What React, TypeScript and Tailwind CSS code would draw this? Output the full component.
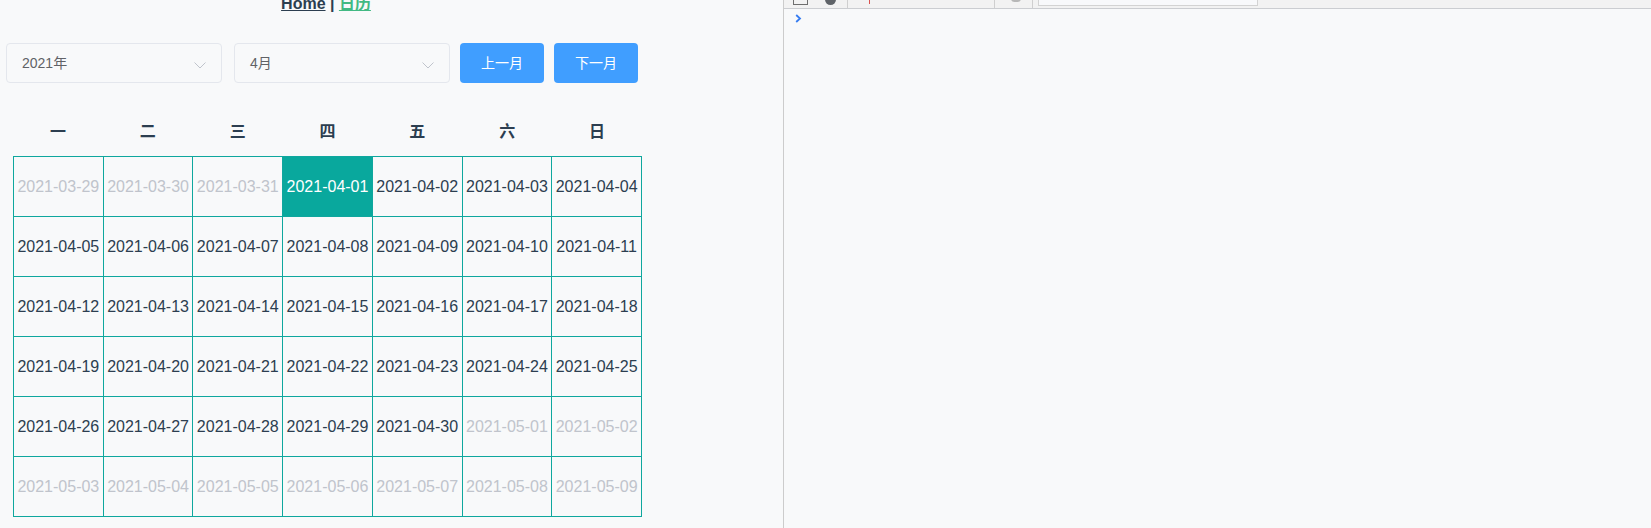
import React from 'react';

const weekDays = ['一', '二', '三', '四', '五', '六', '日'];

const pad = (n: number) => (n < 10 ? `0${n}` : `${n}`);

// build the 6x7 grid for April 2021, Monday first
const buildDays = () => {
  const start = new Date(2021, 2, 29);
  const days: { label: string; inMonth: boolean; today: boolean }[] = [];
  for (let i = 0; i < 42; i++) {
    const d = new Date(start.getFullYear(), start.getMonth(), start.getDate() + i);
    const label = `${d.getFullYear()}-${pad(d.getMonth() + 1)}-${pad(d.getDate())}`;
    days.push({ label, inMonth: d.getMonth() === 3, today: label === '2021-04-01' });
  }
  return days;
};

const Chevron: React.FC = () => (
  <svg width="12" height="7" viewBox="0 0 12 7" className="absolute right-[15px] top-[18px]">
    <polyline points="0.5,0.5 6,6 11.5,0.5" fill="none" stroke="#c0c4cc" strokeWidth="1" />
  </svg>
);

const Select: React.FC<{ value: string }> = ({ value }) => (
  <div className="relative w-[216px] h-10 rounded border border-[#e4e7ed] flex items-center pl-[15px] text-sm text-[#606266]">
    {value}
    <Chevron />
  </div>
);

const Button: React.FC<{ label: string }> = ({ label }) => (
  <button className="w-[84px] h-10 rounded bg-[#409eff] text-white text-sm">{label}</button>
);

const DevTools: React.FC = () => (
  <div className="flex-1 flex flex-col bg-[#f8f9fa]">
    <div className="h-[9px] bg-[#f2f2f2] border-b border-[#cbcdd1] flex items-end relative overflow-hidden">
      <div className="absolute left-[9px] -top-[8px] w-[15px] h-[13px] border border-[#6e6e6e]" />
      <div className="absolute left-[41px] -top-[6px] w-[11px] h-[11px] rounded-full bg-[#5f6368]" />
      <div className="absolute left-[63px] top-0 w-px h-[8px] bg-[#cfcfcf]" />
      <div className="absolute left-[85px] top-0 w-px h-[4px] bg-[#d9534f]" />
      <div className="absolute left-[210px] top-0 w-px h-[8px] bg-[#cfcfcf]" />
      <div className="absolute left-[227px] -top-[5px] w-[10px] h-[7px] rounded-full bg-[#b7b7b7]" />
      <div className="absolute left-[248px] top-0 w-px h-[8px] bg-[#cfcfcf]" />
      <div className="absolute left-[254px] top-0 w-[220px] h-[6px] bg-[#f8f9fb] border-b border-r border-l border-[#d3d3d3] overflow-hidden">
        <span className="absolute left-[5px] -top-[11px] text-[12px] leading-[14px] text-[#777]">Filter</span>
      </div>
    </div>
    <div className="pl-[11px] pt-[5px] h-[10px]">
      <svg width="7" height="9" viewBox="0 0 7 9">
        <polyline points="1.2,1 5,4.5 1.2,8" fill="none" stroke="#367cf1" strokeWidth="1.8" />
      </svg>
    </div>
  </div>
);

export default function App() {
  const days = buildDays();

  return (
    <div
      className="flex h-[528px] w-[1651px] overflow-hidden bg-[#f8f9fa] text-[#2c3e50]"
      style={{ fontFamily: '"Liberation Sans", Arial, "Noto Sans CJK SC", sans-serif' }}
    >
      <div className="w-[784px] border-r border-[#cccccc] shrink-0">
        <div className="w-[652px]">
          <div className="-mt-[6px] text-center font-bold text-base leading-5">
            <a className="underline text-[#2c3e50]">Home</a>
            <span> | </span>
            <a className="underline text-[#42b983]">日历</a>
          </div>

          <div className="mt-[29px] pl-[6px] flex items-center">
            <Select value="2021年" />
            <div className="w-3" />
            <Select value="4月" />
            <div className="w-[10px]" />
            <Button label="上一月" />
            <div className="w-[10px]" />
            <Button label="下一月" />
          </div>

          <div className="ml-[13px] mt-[29px] w-[629px] grid grid-cols-7 h-10">
            {weekDays.map((w) => (
              <div key={w} className="flex items-center justify-center font-bold text-base">
                {w}
              </div>
            ))}
          </div>

          <div className="ml-[13px] mt-1 w-[629px] grid grid-cols-7 border-l border-t border-[#0fa79e]">
            {days.map((d) => (
              <div
                key={d.label}
                className={`h-[60px] flex items-center justify-center border-r border-b border-[#0fa79e] text-base ${
                  d.today ? 'bg-[#09a89d] text-white' : d.inMonth ? 'text-[#2c3e50]' : 'text-[#c0c4cc]'
                }`}
              >
                {d.label}
              </div>
            ))}
          </div>
        </div>
      </div>
      <DevTools />
    </div>
  );
}
